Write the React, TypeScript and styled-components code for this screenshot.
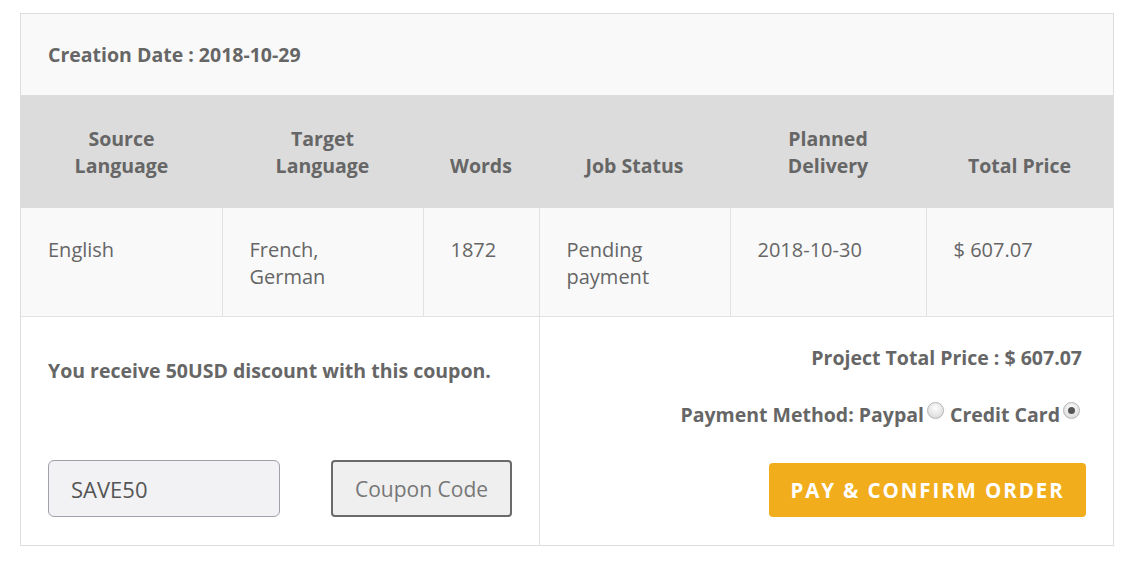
import React from "react";
import styled, { createGlobalStyle } from "styled-components";

const Global = createGlobalStyle`
  html, body { margin: 0; padding: 0; background: #fff; }
  body { font-family: "Open Sans", "Noto Sans", sans-serif; color: #666; }
  * { box-sizing: border-box; }
`;

const Page = styled.div`
  padding: 13px 26px 18px 20px;
`;

const Card = styled.div`
  width: 1094px;
  border: 1px solid #ddd;
  background: #fff;
`;

const DateBar = styled.div`
  height: 81px;
  background: #f9f9f9;
  padding: 0 27px;
  display: flex;
  align-items: center;
  font-size: 19.5px;
  font-weight: 700;
  color: #666;
`;

const Table = styled.table`
  width: 100%;
  border-collapse: collapse;
  table-layout: fixed;
`;

const Th = styled.th<{ $w: number }>`
  width: ${(p) => p.$w}px;
  background: #dcdcdc;
  font-size: 19.5px;
  font-weight: 700;
  color: #666;
  line-height: 27px;
  text-align: center;
  vertical-align: bottom;
  padding: 30px 6px 29px;
`;

const Td = styled.td`
  background: #f9f9f9;
  border-right: 1px solid #e2e2e2;
  border-bottom: 1px solid #e2e2e2;
  font-size: 20px;
  color: #666;
  line-height: 27px;
  vertical-align: top;
  padding: 28px 16px 26px 27px;
  &:last-child { border-right: none; }
`;

const Bottom = styled.div`
  display: grid;
  grid-template-columns: 519px 1fr;
  height: 228px;
`;

const CouponCol = styled.div`
  border-right: 1px solid #e2e2e2;
  padding: 40px 27px 28px 27px;
  display: flex;
  flex-direction: column;
  justify-content: space-between;
`;

const Note = styled.div`
  font-size: 19.5px;
  font-weight: 700;
  line-height: 27px;
  color: #666;
`;

const CouponRow = styled.div`
  display: flex;
  justify-content: space-between;
  align-items: center;
`;

const CouponInput = styled.input`
  width: 232px;
  height: 57px;
  border: 1.5px solid #a0a0a8;
  border-radius: 6px;
  background: #f2f2f4;
  padding: 0 22px;
  font-family: "Open Sans", sans-serif;
  font-size: 22px;
  color: #555;
  outline: none;
`;

const CouponButton = styled.button`
  width: 181px;
  height: 57px;
  border: 2px solid #6a6a6a;
  border-radius: 4px;
  background: #efefef;
  font-family: "Open Sans", sans-serif;
  font-size: 21px;
  color: #777;
  padding: 0;
`;

const PayCol = styled.div`
  padding: 27px 31px 28px 20px;
  display: flex;
  flex-direction: column;
  align-items: flex-end;
`;

const Total = styled.div`
  font-size: 19.5px;
  font-weight: 700;
  line-height: 27px;
  color: #666;
`;

const Method = styled.div`
  margin-top: 30px;
  display: flex;
  align-items: center;
  font-size: 19.5px;
  font-weight: 700;
  line-height: 27px;
  color: #666;
`;

const Radio = styled.span<{ $checked?: boolean }>`
  display: inline-block;
  width: 17px;
  height: 17px;
  border-radius: 50%;
  margin: 0 6px 8px 3px;
  border: 1px solid #b4b4b4;
  background: radial-gradient(circle at 50% 35%, #fdfdfd 0%, #e6e6e6 55%, #cfcfcf 100%);
  position: relative;
  &:last-child { margin-right: 2px; }
  &::after {
    content: "";
    display: ${(p) => (p.$checked ? "block" : "none")};
    position: absolute;
    left: 4px;
    top: 4px;
    width: 7px;
    height: 7px;
    border-radius: 50%;
    background: #555;
  }
`;

const PayButton = styled.button`
  margin-top: 35px;
  margin-right: -4px;
  width: 317px;
  height: 54px;
  border: none;
  border-radius: 4px;
  background: #f2ad1c;
  color: #fff;
  font-family: "Open Sans", sans-serif;
  font-size: 20.5px;
  font-weight: 700;
  letter-spacing: 1.9px;
  padding: 0;
`;

const headers = [
  { w: 201, t: <>Source<br />Language</> },
  { w: 201, t: <>Target<br />Language</> },
  { w: 116, t: <>Words</> },
  { w: 191, t: <>Job Status</> },
  { w: 196, t: <>Planned<br />Delivery</> },
  { w: 187, t: <>Total Price</> },
];

const row = [
  <>English</>,
  <>French,<br />German</>,
  <>1872</>,
  <>Pending<br />payment</>,
  <>2018-10-30</>,
  <>$ 607.07</>,
];

export default function App() {
  return (
    <Page>
      <Global />
      <Card>
        <DateBar>Creation Date : 2018-10-29</DateBar>
        <Table>
          <thead>
            <tr>
              {headers.map((h, i) => (
                <Th key={i} $w={h.w}>{h.t}</Th>
              ))}
            </tr>
          </thead>
          <tbody>
            <tr>
              {row.map((c, i) => (
                <Td key={i}>{c}</Td>
              ))}
            </tr>
          </tbody>
        </Table>
        <Bottom>
          <CouponCol>
            <Note>You receive 50USD discount with this coupon.</Note>
            <CouponRow>
              <CouponInput defaultValue="SAVE50" />
              <CouponButton>Coupon Code</CouponButton>
            </CouponRow>
          </CouponCol>
          <PayCol>
            <Total>Project Total Price : $ 607.07</Total>
            <Method>
              Payment Method: Paypal<Radio />Credit Card<Radio $checked />
            </Method>
            <PayButton>PAY &amp; CONFIRM ORDER</PayButton>
          </PayCol>
        </Bottom>
      </Card>
    </Page>
  );
}
